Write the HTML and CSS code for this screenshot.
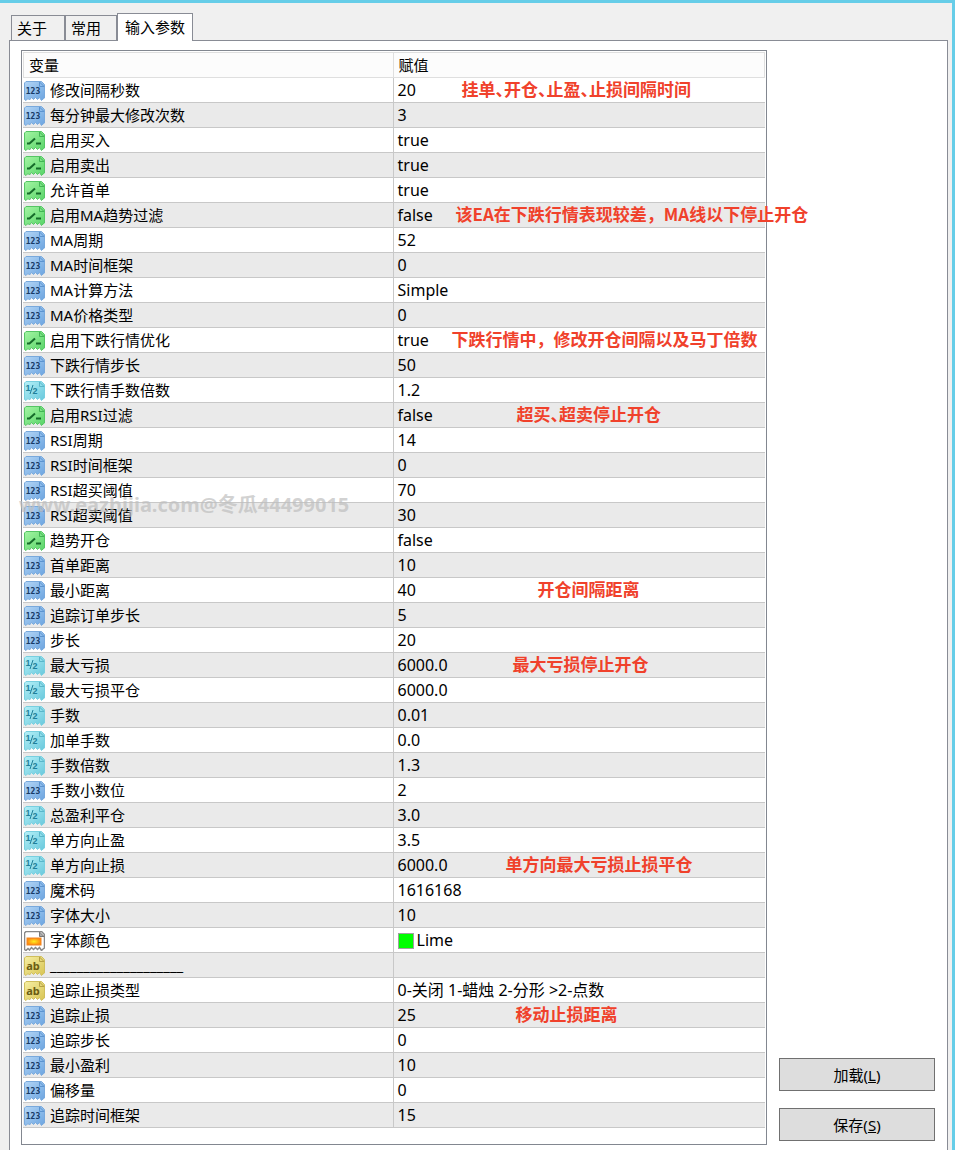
FILE: index.html
```
<!DOCTYPE html>
<html lang="zh-CN">
<head>
    <meta charset="UTF-8">
    <meta name="viewport" content="width=device-width, initial-scale=1.0">
    <title>输入参数</title>
    <link rel="stylesheet" href="styles.css">
</head>
<body>
    <!-- Shared icon shapes and colours -->
    <svg class="sprite" aria-hidden="true">
        <defs>
            <linearGradient id="blue" x1="0" y1="0" x2="1" y2="1"><stop offset="0" stop-color="#b4d6f6"/><stop offset="1" stop-color="#6ba4e0"/></linearGradient>
            <linearGradient id="green" x1="0" y1="0" x2="1" y2="1"><stop offset="0" stop-color="#a4f5a4"/><stop offset="1" stop-color="#58d468"/></linearGradient>
            <linearGradient id="cyan" x1="0" y1="0" x2="1" y2="1"><stop offset="0" stop-color="#b4f0f8"/><stop offset="1" stop-color="#68c8dc"/></linearGradient>
            <linearGradient id="yellow" x1="0" y1="0" x2="1" y2="1"><stop offset="0" stop-color="#f6efa4"/><stop offset="1" stop-color="#d8c452"/></linearGradient>
            <radialGradient id="orange"><stop offset="0" stop-color="#ffee20"/><stop offset="1" stop-color="#ff8a10"/></radialGradient>
            <path id="page" d="M2 .5H17.500L20.500 3.500V17L19 18L17.500 19.500L15.500 16.500L13.500 18.500L11.500 16.500L9.500 18.500L7.500 16.500L5.500 19L4 17.500L2 19.500L.5 18.500V2Z"/>
        </defs>
    </svg>
    <svg class="symbols" aria-hidden="true">
        <symbol id="int" viewBox="0 0 21 20">
            <use href="#page" fill="url(#blue)" stroke="#79a9dc"/>
            <path d="M15.500 1V5.500H20Z" fill="#8dbcec" stroke="#5c94d0"/>
            <text x="9" y="13" class="icon-num">123</text>
        </symbol>
        <symbol id="bool" viewBox="0 0 21 20">
            <use href="#page" fill="url(#green)" stroke="#55c565"/>
            <path d="M15.500 1V5.500H20Z" fill="#7ce584" stroke="#42b455"/>
            <path d="M3 12.500H5.500L11 7.500M12 12.500H17" fill="none" stroke="#156b2a" stroke-width="2"/>
        </symbol>
        <symbol id="double" viewBox="0 0 21 20">
            <use href="#page" fill="url(#cyan)" stroke="#78cfdf"/>
            <path d="M15.500 1V5.500H20Z" fill="#8fdfeb" stroke="#59b6ca"/>
            <path d="M9 4L6 13" stroke="#1f7f9a"/>
            <text x="4" y="10" class="icon-half">1</text>
            <text x="11" y="13" class="icon-half">2</text>
        </symbol>
        <symbol id="color" viewBox="0 0 21 20">
            <use href="#page" fill="#fff" stroke="#888" stroke-width="1.500"/>
            <path d="M15.500 1V5.500H20Z" fill="#aaa" stroke="#777"/>
            <rect x="3" y="7" width="14" height="7" fill="url(#orange)" stroke="#ef8422"/>
        </symbol>
        <symbol id="string" viewBox="0 0 21 20">
            <use href="#page" fill="url(#yellow)" stroke="#cfbe5c"/>
            <path d="M15.500 1V5.500H20Z" fill="#e6d878" stroke="#b5a145"/>
            <text x="9" y="14" class="icon-ab">ab</text>
        </symbol>
    </svg>

    <main class="dialog">
        <div class="tabs" role="tablist">
            <button class="tab" role="tab">关于</button>
            <button class="tab" role="tab">常用</button>
            <button class="tab active" role="tab" aria-selected="true">输入参数</button>
        </div>
        <div class="panel">
            <div class="list">
                <table class="params">
                    <thead>
                        <tr><th class="name">变量</th><th>赋值</th></tr>
                    </thead>
                    <tbody>
                        <tr><td><svg class="icon"><use href="#int"/></svg>修改间隔秒数</td><td>20<span class="note tight n-interval">挂单、开仓、止盈、止损间隔时间</span></td></tr>
                        <tr><td><svg class="icon"><use href="#int"/></svg>每分钟最大修改次数</td><td>3</td></tr>
                        <tr><td><svg class="icon"><use href="#bool"/></svg>启用买入</td><td>true</td></tr>
                        <tr><td><svg class="icon"><use href="#bool"/></svg>启用卖出</td><td>true</td></tr>
                        <tr><td><svg class="icon"><use href="#bool"/></svg>允许首单</td><td>true</td></tr>
                        <tr><td><svg class="icon"><use href="#bool"/></svg>启用MA趋势过滤</td><td>false<span class="note n-ma">该EA在下跌行情表现较差，MA线以下停止开仓</span></td></tr>
                        <tr><td><svg class="icon"><use href="#int"/></svg>MA周期</td><td>52</td></tr>
                        <tr><td><svg class="icon"><use href="#int"/></svg>MA时间框架</td><td>0</td></tr>
                        <tr><td><svg class="icon"><use href="#int"/></svg>MA计算方法</td><td>Simple</td></tr>
                        <tr><td><svg class="icon"><use href="#int"/></svg>MA价格类型</td><td>0</td></tr>
                        <tr><td><svg class="icon"><use href="#bool"/></svg>启用下跌行情优化</td><td>true<span class="note n-fall">下跌行情中，修改开仓间隔以及马丁倍数</span></td></tr>
                        <tr><td><svg class="icon"><use href="#int"/></svg>下跌行情步长</td><td>50</td></tr>
                        <tr><td><svg class="icon"><use href="#double"/></svg>下跌行情手数倍数</td><td>1.2</td></tr>
                        <tr><td><svg class="icon"><use href="#bool"/></svg>启用RSI过滤</td><td>false<span class="note tight n-rsi">超买、超卖停止开仓</span></td></tr>
                        <tr><td><svg class="icon"><use href="#int"/></svg>RSI周期</td><td>14</td></tr>
                        <tr><td><svg class="icon"><use href="#int"/></svg>RSI时间框架</td><td>0</td></tr>
                        <tr><td><svg class="icon"><use href="#int"/></svg>RSI超买阈值</td><td>70</td></tr>
                        <tr><td><svg class="icon"><use href="#int"/></svg>RSI超卖阈值</td><td>30</td></tr>
                        <tr><td><svg class="icon"><use href="#bool"/></svg>趋势开仓</td><td>false</td></tr>
                        <tr><td><svg class="icon"><use href="#int"/></svg>首单距离</td><td>10</td></tr>
                        <tr><td><svg class="icon"><use href="#int"/></svg>最小距离</td><td>40<span class="note n-distance">开仓间隔距离</span></td></tr>
                        <tr><td><svg class="icon"><use href="#int"/></svg>追踪订单步长</td><td>5</td></tr>
                        <tr><td><svg class="icon"><use href="#int"/></svg>步长</td><td>20</td></tr>
                        <tr><td><svg class="icon"><use href="#double"/></svg>最大亏损</td><td>6000.0<span class="note n-loss">最大亏损停止开仓</span></td></tr>
                        <tr><td><svg class="icon"><use href="#double"/></svg>最大亏损平仓</td><td>6000.0</td></tr>
                        <tr><td><svg class="icon"><use href="#double"/></svg>手数</td><td>0.01</td></tr>
                        <tr><td><svg class="icon"><use href="#double"/></svg>加单手数</td><td>0.0</td></tr>
                        <tr><td><svg class="icon"><use href="#double"/></svg>手数倍数</td><td>1.3</td></tr>
                        <tr><td><svg class="icon"><use href="#int"/></svg>手数小数位</td><td>2</td></tr>
                        <tr><td><svg class="icon"><use href="#double"/></svg>总盈利平仓</td><td>3.0</td></tr>
                        <tr><td><svg class="icon"><use href="#double"/></svg>单方向止盈</td><td>3.5</td></tr>
                        <tr><td><svg class="icon"><use href="#double"/></svg>单方向止损</td><td>6000.0<span class="note n-side">单方向最大亏损止损平仓</span></td></tr>
                        <tr><td><svg class="icon"><use href="#int"/></svg>魔术码</td><td>1616168</td></tr>
                        <tr><td><svg class="icon"><use href="#int"/></svg>字体大小</td><td>10</td></tr>
                        <tr><td><svg class="icon"><use href="#color"/></svg>字体颜色</td><td><span class="swatch"></span>Lime</td></tr>
                        <tr><td><svg class="icon"><use href="#string"/></svg>____________________</td><td></td></tr>
                        <tr><td><svg class="icon"><use href="#string"/></svg>追踪止损类型</td><td>0-关闭 1-蜡烛 2-分形 &gt;2-点数</td></tr>
                        <tr><td><svg class="icon"><use href="#int"/></svg>追踪止损</td><td>25<span class="note n-move">移动止损距离</span></td></tr>
                        <tr><td><svg class="icon"><use href="#int"/></svg>追踪步长</td><td>0</td></tr>
                        <tr><td><svg class="icon"><use href="#int"/></svg>最小盈利</td><td>10</td></tr>
                        <tr><td><svg class="icon"><use href="#int"/></svg>偏移量</td><td>0</td></tr>
                        <tr><td><svg class="icon"><use href="#int"/></svg>追踪时间框架</td><td>15</td></tr>
                    </tbody>
                </table>
            </div>
            <div class="actions">
                <button class="btn">加载(<u>L</u>)</button>
                <button class="btn">保存(<u>S</u>)</button>
            </div>
            <div class="watermark">www.eazhijia.com@冬瓜44499015</div>
        </div>
    </main>
</body>
</html>
```
FILE: styles.css
```
* {
    box-sizing: border-box;
}
html {
    background: #f0f0f0;
    overflow: hidden;
}
body {
    margin: 0;
    font-family: "Noto Sans", "Noto Sans CJK SC", sans-serif;
    font-size: 15px;
    color: #000;
}
button {
    font: inherit;
    color: inherit;
}
.sprite {
    position: absolute;
    width: 0;
    height: 0;
}
.symbols {
    display: none;
}
.dialog {
    min-height: 100vh;
    padding: 10px 4px 0 9px;
    border-top: 3px solid #66cde8;
    border-right: 3px solid #66cde8;
}

/* Tabs */
.tabs {
    display: flex;
    align-items: flex-end;
    padding-left: 2px;
}
.tab {
    height: 25px;
    padding: 0 17px 0 5px;
    border: 1px solid #898c95;
    border-bottom: none;
    background: #f0f0f0;
    line-height: 24px;
}
.tab + .tab {
    padding-right: 15px;
}
.tab.active {
    position: relative;
    z-index: 1;
    height: 28px;
    margin-bottom: -1px;
    padding: 0 7px;
    background: #fff;
    line-height: 25px;
}

/* Panel */
.panel {
    position: relative;
    display: flex;
    gap: 12px;
    padding: 9px 12px 12px 11px;
    border: 1px solid #898c95;
    background: #fff;
}
.list {
    flex: 1;
    padding: 1px 1px 16px;
    border: 1px solid #828790;
}
.params {
    width: 100%;
    border-collapse: separate;
    border-spacing: 0;
    table-layout: fixed;
}
.params th {
    height: 26px;
    padding: 0 5px;
    border: 1px solid #dfdfdf;
    background: #fcfcfc;
    font-weight: normal;
    text-align: left;
    line-height: 24px;
}
.params th.name {
    width: 49.8%;
    border-right: none;
}
.params td {
    position: relative;
    height: 25px;
    padding: 0 4px 0 1px;
    border-bottom: 1px solid #c8c8c8;
    line-height: 24px;
    white-space: nowrap;
}
.params td + td {
    padding-left: 4px;
    border-left: 1px solid #c8c8c8;
    font-size: 16px;
}
.params tbody tr:nth-child(even) {
    background: #eaeaea;
}
.icon {
    width: 21px;
    height: 20px;
    margin: -2px 5px 0 0;
    vertical-align: middle;
}
.icon-num {
    font: bold 8px "DejaVu Sans Mono", monospace;
    fill: #163a66;
    text-anchor: middle;
}
.icon-half {
    font: bold 9px "Liberation Sans", sans-serif;
    fill: #1f7f9a;
    text-anchor: middle;
}
.icon-ab {
    font: bold 11px "Noto Sans", sans-serif;
    fill: #6b5d14;
    text-anchor: middle;
}
.swatch {
    display: inline-block;
    width: 16px;
    height: 16px;
    margin: -2px 3px 0 0;
    border: 1px solid #a0a0a0;
    background: #0f0;
    vertical-align: middle;
}

/* Red remarks lying over the value column */
.note {
    position: absolute;
    top: -1px;
    z-index: 2;
    font-family: "Noto Sans CJK SC", sans-serif;
    font-size: 17px;
    font-weight: bold;
    color: #f0412b;
}
.tight {
    font-feature-settings: "halt";
}
.n-interval { left: 68px; }
.n-ma { left: 62px; }
.n-fall { left: 58px; }
.n-rsi { left: 123px; }
.n-distance { left: 144px; }
.n-loss { left: 119px; }
.n-side { left: 112px; }
.n-move { left: 122px; }

/* Buttons on the right */
.actions {
    display: flex;
    flex-direction: column;
    justify-content: flex-end;
    gap: 17px;
    width: 156px;
    padding-bottom: 4px;
}
.btn {
    height: 33px;
    padding: 0;
    border: 1px solid #707070;
    background: #ddd;
    line-height: 30px;
}

.watermark {
    position: absolute;
    left: 9px;
    top: 450px;
    font-size: 20px;
    font-weight: bold;
    line-height: 28px;
    color: rgba(190, 190, 190, 0.7);
    pointer-events: none;
}
```
